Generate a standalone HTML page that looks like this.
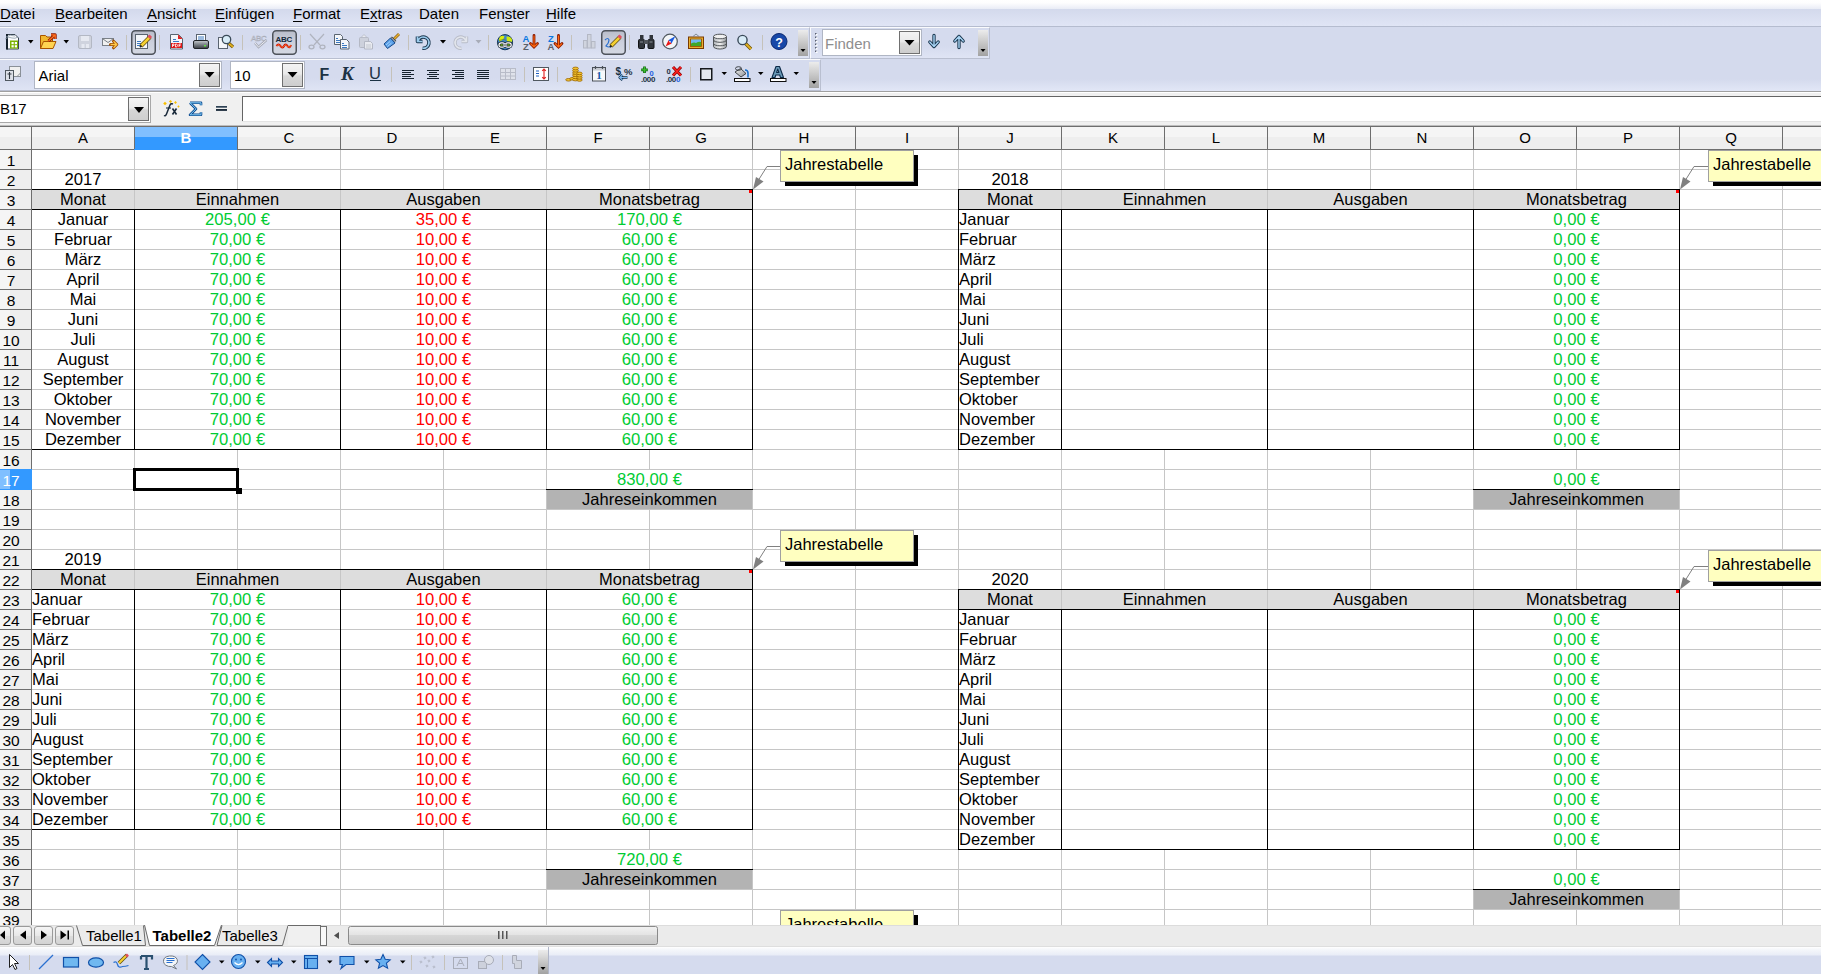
<!DOCTYPE html>
<html><head><meta charset="utf-8">
<style>
html,body{margin:0;padding:0}
body{width:1821px;height:974px;overflow:hidden;position:relative;background:#fff;font-family:"Liberation Sans",sans-serif;}
.a{position:absolute}
.menu{left:0;top:0;width:1821px;height:26px;background:linear-gradient(to bottom,#ffffff 0,#fdfdfe 3px,#e9ecf6 9px,#d3d9ec 9px,#e0e5f5 26px);border-bottom:1px solid #b5bccf}
.mi{top:1px;height:26px;line-height:26px;font-size:15px;color:#000;white-space:nowrap}
.mi u{text-decoration:underline;text-underline-offset:2px}
.tbarea{left:0;top:27px;width:1821px;height:64px;background:linear-gradient(to bottom,#d4daed 0,#d4daed 52px,#e1e6f6 63px)}
.tb{border-top:1px solid #fafbfd;border-left:1px solid #fafbfd;border-right:1px solid #b9bfd0;border-bottom:1px solid #b9bfd0;background:linear-gradient(to bottom,#d5dbee 0,#d5dbee 60%,#dfe4f4 100%);box-sizing:border-box}
.fbar{left:0;top:91px;width:1821px;height:35px;background:#f0f0f0;border-top:1px solid #a0a0a0;box-sizing:border-box}
.colhdr{background:linear-gradient(to bottom,#f5f5f5 0,#f5f5f5 10px,#eeeeee 10px,#eeeeee 100%)}
.rowhdr{background:linear-gradient(to right,#f5f5f5 0,#f5f5f5 10px,#eeeeee 10px,#eeeeee 100%)}
.hl{height:22px;line-height:22px;font-size:15px;text-align:center}
.rl{height:20px;line-height:20px;font-size:15.5px;text-align:center}
.cm{background:#ffffc0;border:1px solid #a0a0a0;font-size:16.5px;line-height:26px;padding-left:4px;box-sizing:content-box;color:#000;white-space:nowrap;overflow:hidden}
.combo{background:#fff;border:1px solid #b8b8b8;box-sizing:border-box}
.ddb{border:1px solid #6e6e6e;background:linear-gradient(to bottom,#f4f4f4 0,#eaeaea 45%,#d6d6d6 55%,#cfcfcf 100%);box-sizing:border-box}
.tri{width:0;height:0;border-left:5px solid transparent;border-right:5px solid transparent;border-top:6px solid #000}
.smtri{width:0;height:0;border-left:3.5px solid transparent;border-right:3.5px solid transparent;border-top:4px solid #000}
.sep{width:1px;background:#c5c2ba}
.handle{background:linear-gradient(to bottom,#ececec 0,#a6a6a6 100%)}
.tabbar{left:0;top:925px;width:1821px;height:22px;background:linear-gradient(to bottom,#dcdcdc 0,#dcdcdc 1px,#ebebeb 1px,#ebebeb 21px,#dedede 21px)}
.dtb{left:0;top:947px;width:1821px;height:27px;background:linear-gradient(to bottom,#ffffff 0,#f6f8fb 2px,#e9edf7 8px,#d5dbee 9px,#d5dbee 100%)}
</style></head><body>
<div class="a menu"></div>
<div class="a mi" style="left:0"><u>D</u>atei</div>
<div class="a mi" style="left:55px"><u>B</u>earbeiten</div>
<div class="a mi" style="left:147px"><u>A</u>nsicht</div>
<div class="a mi" style="left:215px"><u>E</u>infügen</div>
<div class="a mi" style="left:293px"><u>F</u>ormat</div>
<div class="a mi" style="left:360px">E<u>x</u>tras</div>
<div class="a mi" style="left:419px">Da<u>t</u>en</div>
<div class="a mi" style="left:479px">Fen<u>s</u>ter</div>
<div class="a mi" style="left:546px"><u>H</u>ilfe</div>
<div class="a tbarea"></div>
<div class="a tb" style="left:-1px;top:27px;width:811px;height:32px"></div>
<div class="a tb" style="left:810px;top:27px;width:180px;height:32px"></div>
<div class="a tb" style="left:-1px;top:59px;width:822px;height:32px"></div>
<svg class="a" style="left:0;top:0" width="1000" height="92"><defs><linearGradient id="prs" x1="0" y1="0" x2="0" y2="1"><stop offset="0" stop-color="#b9bdca"/><stop offset=".5" stop-color="#ccd0dc"/><stop offset="1" stop-color="#d4d8e2"/></linearGradient><linearGradient id="hdl" x1="0" y1="0" x2="0" y2="1"><stop offset="0" stop-color="#ececec"/><stop offset="1" stop-color="#a2a2a2"/></linearGradient><linearGradient id="ddb" x1="0" y1="0" x2="0" y2="1"><stop offset="0" stop-color="#f4f4f4"/><stop offset=".45" stop-color="#eaeaea"/><stop offset=".55" stop-color="#d8d8d8"/><stop offset="1" stop-color="#cdcdcd"/></linearGradient><linearGradient id="prt" x1="0" y1="0" x2="0" y2="1"><stop offset="0" stop-color="#c8ccd0"/><stop offset=".4" stop-color="#8a9096"/><stop offset="1" stop-color="#3a3e44"/></linearGradient><linearGradient id="db" x1="0" y1="0" x2="1" y2="0"><stop offset="0" stop-color="#b0b4b8"/><stop offset=".5" stop-color="#f0f0f0"/><stop offset="1" stop-color="#909498"/></linearGradient><linearGradient id="bkt" x1="0" y1="0" x2="1" y2="1"><stop offset="0" stop-color="#f4f4f4"/><stop offset="1" stop-color="#8a8e92"/></linearGradient></defs><path d="M6.5 34.5h8.5l3.5 3.5v11h-12z" fill="#fafbfc" stroke="#3a4654"/><rect x="6" y="34" width="2" height="15.5" fill="#16222e"/><path d="M5 39q4 -3 7 -1q3 1 6 -1M6 37q4 -3 9 -1" stroke="#8a9aaa" stroke-width=".8" fill="none"/><rect x="10" y="40.5" width="8" height="8" fill="#7cb400"/><rect x="11.5" y="42" width="2.2" height="2.2" fill="#fff"/><rect x="14.8" y="42" width="2.2" height="2.2" fill="#fff"/><rect x="11.5" y="45.2" width="2.2" height="2.2" fill="#fff"/><rect x="14.8" y="45.2" width="2.2" height="2.2" fill="#fff"/><path d="M28 40h5.5l-2.75 3.5z" fill="#000"/><path d="M40.5 35.5h5l1.5 1.5h5.5v11.5h-12z" fill="#f0b830" stroke="#a85400"/><path d="M43.5 41.5h12.5l-3 7h-12.5z" fill="#ffd452" stroke="#a85400"/><path d="M48.5 41l6 -5.5M51 34.8h4.2v4.2" stroke="#8a1800" stroke-width="3" fill="none" stroke-linejoin="round"/><path d="M48.5 41l6 -5.5M51 34.8h4.2v4.2" stroke="#ff7020" stroke-width="1.3" fill="none"/><path d="M63.5 40h5.5l-2.75 3.5z" fill="#000"/><rect x="78.5" y="35.5" width="13" height="13" rx="1.5" fill="#cfd3de" stroke="#b3b8c4"/><rect x="81" y="36" width="8" height="5" fill="#e6e9f1"/><rect x="81.5" y="44" width="3" height="4" fill="#e6e9f1"/><rect x="86" y="44" width="3" height="4" fill="#e6e9f1"/><rect x="102.5" y="38.5" width="11" height="7" fill="#f0f0f0" stroke="#7a8088"/><path d="M103 39l5 3.5l5 -3.5" stroke="#7a8088" fill="none"/><path d="M110.5 44.5h5.5M113.5 41.2l3.3 3.3l-3.3 3.3" stroke="#9a4a00" stroke-width="3" fill="none" stroke-linejoin="round" stroke-linecap="round"/><path d="M110.5 44.5h5.5M113.5 41.2l3.3 3.3l-3.3 3.3" stroke="#ffc848" stroke-width="1.3" fill="none" stroke-linejoin="round"/><rect x="126" y="35" width="1" height="15" fill="#c5c2ba"/><rect x="131.75" y="30.75" width="23.5" height="23.5" rx="3.5" fill="url(#prs)" stroke="#4e535b" stroke-width="1.5"/><rect x="135.5" y="34.5" width="12" height="14" fill="#f4f6fa" stroke="#5a6470"/><path d="M137 41.5h4M137 43.5h4M137 45.5h4" stroke="#3a78c0"/><path d="M141 46l9 -9" stroke="#5a4a10" stroke-width="4"/><path d="M141 46l9 -9" stroke="#f5d030" stroke-width="2.6"/><path d="M148.5 35.5l2.5 2.5" stroke="#e05060" stroke-width="3"/><path d="M140 47l1.5 -1.5" stroke="#222" stroke-width="2"/><rect x="159" y="35" width="1" height="15" fill="#c5c2ba"/><path d="M170.5 34.5h8l4 4v10.5h-12z" fill="#f4f6fa" stroke="#5a6470"/><path d="M178 34.5l4.5 4.5h-4.5z" fill="#e02020"/><path d="M173 39.5h3M173 41.5h6" stroke="#3a78c0"/><rect x="171" y="43" width="11" height="5" fill="#e01818"/><path d="M172.5 47v-3h1.5v1.5h-1.5M175.5 47v-3h1.2l.8 1.5l-.8 1.5zM179 47v-3h2M179 45.5h1.5" stroke="#fff" stroke-width=".8" fill="none"/><rect x="196.5" y="34.5" width="9" height="7" fill="#fff" stroke="#5a6470"/><path d="M198 37h6M198 39h6" stroke="#3a78c0"/><rect x="193.5" y="40.5" width="15" height="8" rx="1.5" fill="url(#prt)" stroke="#202428"/><rect x="204" y="45" width="2" height="1.5" fill="#60e040"/><rect x="218.5" y="37.5" width="9" height="11" fill="#f4f6fa" stroke="#5a6470"/><path d="M229 43.5l4 3.5" stroke="#6a4e00" stroke-width="3.2"/><path d="M229 43.5l4 3.5" stroke="#e0b020" stroke-width="1.8"/><circle cx="226.5" cy="39.5" r="4.2" fill="#d8ecf8" stroke="#3a4a58" stroke-width="1.3"/><rect x="242" y="35" width="1" height="15" fill="#c5c2ba"/><text x="251" y="40.5" font-family="Liberation Sans" font-size="8" fill="#e4e7ef" stroke="#a8acb8" stroke-width=".5" letter-spacing="-.3">ABC</text><path d="M255 43l3.5 4l8 -7" stroke="#a8acb8" stroke-width="2.4" fill="none"/><path d="M255 43l3.5 4l8 -7" stroke="#e8eaf0" stroke-width="1" fill="none"/><rect x="272.75" y="30.75" width="23.5" height="23.5" rx="3.5" fill="url(#prs)" stroke="#4e535b" stroke-width="1.5"/><text x="275.5" y="42.3" font-family="Liberation Sans" font-weight="bold" font-size="8" fill="#15283a" letter-spacing="-.3">ABC</text><path d="M276.5 46q2 -3 4 0t3.5 0t3.5 0t3.5 -1" stroke="#d00000" stroke-width="2" fill="none"/><path d="M276.5 46q2 -3 4 0t3.5 0t3.5 0t3.5 -1" stroke="#ffa030" stroke-width=".7" fill="none"/><rect x="300" y="35" width="1" height="15" fill="#c5c2ba"/><path d="M310 34l10 11M324 34l-10 11" stroke="#b0b4bf" stroke-width="1.2"/><ellipse cx="311.5" cy="47" rx="2.5" ry="1.8" fill="none" stroke="#b0b4bf" stroke-width="1.3"/><ellipse cx="322.5" cy="47" rx="2.5" ry="1.8" fill="none" stroke="#b0b4bf" stroke-width="1.3"/><path d="M334.5 34.5h6l2 2v8h-8z" fill="#f4f6fa" stroke="#5a6470"/><path d="M336 38.5h2M336 40.5h4M336 42.5h4" stroke="#3a78c0"/><path d="M340.5 39.5h6l2.5 2.5v7h-8.5z" fill="#f4f6fa" stroke="#5a6470"/><path d="M342 43.5h2M342 45.5h5M342 47.5h5" stroke="#3a78c0"/><rect x="359.5" y="37.5" width="9" height="10" rx="1" fill="#cdd1dc" stroke="#b4b8c4"/><path d="M361 37.5l3 -3l3 3z" fill="#e8eaf0" stroke="#b4b8c4" stroke-width=".8"/><path d="M364.5 41.5h6l2 2v5.5h-8z" fill="#e8eaf0" stroke="#b4b8c4"/><path d="M366 45h5M366 47h5" stroke="#c4c8d0"/><path d="M394 39l5 -5" stroke="#8a6010" stroke-width="2.8"/><path d="M394 39l5 -5" stroke="#e8b030" stroke-width="1.4"/><path d="M391 37.5l4.5 4.5" stroke="#303a44" stroke-width="2.5"/><path d="M391 37.5l4.5 4.5" stroke="#fff" stroke-width="1"/><path d="M390.5 38l-6.5 6l3.5 4.5l7.5 -5.5z" fill="#5aa0e8" stroke="#1a4a8a"/><path d="M386 45l4 -3.5M387.5 46.5l4 -3.5" stroke="#b8dcff" stroke-width=".8"/><rect x="408" y="35" width="1" height="15" fill="#c5c2ba"/><path d="M417.5 36.5v5h5M418 41a5.6 5.6 0 1 1 4.5 7.2" stroke="#1c3850" stroke-width="3.6" fill="none" stroke-linejoin="round"/><path d="M417.5 36.5v5h5M418 41a5.6 5.6 0 1 1 4.5 7.2" stroke="#9ccced" stroke-width="1.7" fill="none" stroke-linejoin="round"/><path d="M440 40h6l-3.0 3.5z" fill="#000"/><path d="M466.5 36.5v5h-5M466 41a5.6 5.6 0 1 0 -4.5 7.2" stroke="#b8bcc8" stroke-width="3.4" fill="none" stroke-linejoin="round"/><path d="M466.5 36.5v5h-5M466 41a5.6 5.6 0 1 0 -4.5 7.2" stroke="#e2e5ec" stroke-width="1.6" fill="none" stroke-linejoin="round"/><path d="M475.5 40h6l-3.0 3.5z" fill="#a8acb8"/><rect x="488" y="35" width="1" height="15" fill="#c5c2ba"/><circle cx="505" cy="42.2" r="7.6" fill="#3d86c8" stroke="#1a3656" stroke-width="1"/><path d="M499 41.5q-.5 -4 2 -5.5q2 -.8 3.5 .2q-.5 2 -1.5 3q-1 1.5 -4 2.3z" fill="#d8ec10"/><path d="M506.5 36.5q3 -.5 5 2q1 2 .5 3.2q-3 .3 -5 -.7q-.5 -2.5 -.5 -4.5z" fill="#cce810"/><path d="M499 40.5q3 -1 5 -1q1 0 2 1" stroke="#6a8a20" stroke-width=".7" fill="none"/><rect x="499" y="42.8" width="5.8" height="4.4" rx="2.1" fill="#5a8a20" stroke="#13202c" stroke-width="2.4"/><rect x="505.4" y="42.8" width="5.8" height="4.4" rx="2.1" fill="#5a8a20" stroke="#13202c" stroke-width="2.4"/><rect x="499" y="42.8" width="5.8" height="4.4" rx="2.1" fill="none" stroke="#fff" stroke-width="1.2"/><rect x="505.4" y="42.8" width="5.8" height="4.4" rx="2.1" fill="none" stroke="#fff" stroke-width="1.2"/><path d="M502.8 45h4.6" stroke="#13202c" stroke-width="2.2"/><path d="M503 45h4.2" stroke="#fff" stroke-width="1.1"/><text x="522.5" y="41.5" font-family="Liberation Sans" font-weight="bold" font-size="9.5" fill="#0a78e0">A</text><text x="523" y="50" font-family="Liberation Sans" font-weight="bold" font-size="9.5" fill="#5a6068">Z</text><path d="M534 35.5v11.5M530.5 43.5l3.5 3.5l3.5 -3.5" stroke="#8a1a00" stroke-width="2.8" fill="none" stroke-linecap="round"/><path d="M534 35.5v11.5M530.5 43.5l3.5 3.5l3.5 -3.5" stroke="#ff6a10" stroke-width="1.1" fill="none"/><text x="548" y="41.5" font-family="Liberation Sans" font-weight="bold" font-size="9.5" fill="#0a78e0">Z</text><text x="547.5" y="50" font-family="Liberation Sans" font-weight="bold" font-size="9.5" fill="#5a6068">A</text><path d="M558.5 35.5v11.5M555 43.5l3.5 3.5l3.5 -3.5" stroke="#8a1a00" stroke-width="2.8" fill="none" stroke-linecap="round"/><path d="M558.5 35.5v11.5M555 43.5l3.5 3.5l3.5 -3.5" stroke="#ff6a10" stroke-width="1.1" fill="none"/><rect x="571" y="35" width="1" height="15" fill="#c5c2ba"/><rect x="583.5" y="40.5" width="3.5" height="7.5" fill="#d0d4de" stroke="#b4b8c4"/><rect x="587.5" y="34.5" width="3.5" height="13.5" fill="#d0d4de" stroke="#b4b8c4"/><rect x="591.5" y="41.5" width="3.5" height="6.5" fill="#d0d4de" stroke="#b4b8c4"/><rect x="601.75" y="30.75" width="23.5" height="23.5" rx="3.5" fill="url(#prs)" stroke="#4e535b" stroke-width="1.5"/><path d="M605 40q3 -3 4 0q0 3 -3 6q3 2 6 0" stroke="#2a70d0" stroke-width="1.2" fill="none"/><path d="M611 46l9 -9" stroke="#5a4a10" stroke-width="4"/><path d="M611 46l9 -9" stroke="#f5d030" stroke-width="2.6"/><path d="M618.5 35.5l2.5 2.5" stroke="#e05060" stroke-width="3"/><path d="M610 47l1.5 -1.5" stroke="#222" stroke-width="2"/><rect x="629" y="35" width="1" height="15" fill="#c5c2ba"/><rect x="638.5" y="39.5" width="6" height="9" rx="1" fill="#30343a" stroke="#101214"/><rect x="648" y="39.5" width="6" height="9" rx="1" fill="#30343a" stroke="#101214"/><rect x="640" y="35" width="3.5" height="5" fill="#30343a"/><rect x="649.5" y="35" width="3.5" height="5" fill="#30343a"/><rect x="644" y="40" width="4.5" height="4" fill="#50545a"/><path d="M640 42h3M649.5 42h3" stroke="#8a9098"/><circle cx="670" cy="41.5" r="7.3" fill="#f4f6f8" stroke="#505860" stroke-width="1.2"/><path d="M675.5 36l-4 7.5l-3.2 -3.2z" fill="#1a5ae0"/><path d="M665.5 46.5l3 -6.2l3.2 3.2z" fill="#e81818"/><circle cx="670" cy="41.8" r=".8" fill="#fff"/><rect x="688.5" y="37" width="15" height="11.5" fill="#e8b030" stroke="#7a3a00"/><rect x="690.5" y="39" width="11" height="7.5" fill="none" stroke="#8a4a00" stroke-width=".8"/><rect x="691" y="39.5" width="10" height="6.5" fill="#70b8f0"/><path d="M691 46v-2.5q3 -1.5 5 -.5q3 -2 5 -1v4z" fill="#40a828"/><path d="M693 36.5l3 -2.5l3 2.5" stroke="#707880" fill="none" stroke-width=".8"/><path d="M713.5 36.5v10a6.5 2.5 0 0 0 13 0v-10" fill="url(#db)" stroke="#505458"/><ellipse cx="720" cy="36.5" rx="6.5" ry="2.3" fill="#f0f0f0" stroke="#505458"/><path d="M713.5 40a6.5 2.3 0 0 0 13 0M713.5 43.5a6.5 2.3 0 0 0 13 0" stroke="#505458" fill="none"/><path d="M745 43l6 6" stroke="#6a4e00" stroke-width="3.4"/><path d="M745 43l6 6" stroke="#e0b020" stroke-width="2"/><circle cx="742.5" cy="40" r="4.6" fill="#d8ecf8" stroke="#3a4a58" stroke-width="1.4"/><rect x="762" y="35" width="1" height="15" fill="#c5c2ba"/><circle cx="779" cy="41.5" r="8" fill="#1848a8" stroke="#0a2870"/><text x="779" y="46.8" text-anchor="middle" font-family="Liberation Sans" font-weight="bold" font-size="12.5" fill="#fff">?</text><rect x="798" y="30" width="10" height="26" fill="url(#hdl)"/><path d="M800.5 49h5l-2.5 3z" fill="#000"/><rect x="815" y="33.0" width="1.5" height="1.5" fill="#5a6070"/><rect x="816" y="34.0" width="1.5" height="1.5" fill="#fff"/><rect x="815" y="36.5" width="1.5" height="1.5" fill="#5a6070"/><rect x="816" y="37.5" width="1.5" height="1.5" fill="#fff"/><rect x="815" y="40.0" width="1.5" height="1.5" fill="#5a6070"/><rect x="816" y="41.0" width="1.5" height="1.5" fill="#fff"/><rect x="815" y="43.5" width="1.5" height="1.5" fill="#5a6070"/><rect x="816" y="44.5" width="1.5" height="1.5" fill="#fff"/><rect x="815" y="47.0" width="1.5" height="1.5" fill="#5a6070"/><rect x="816" y="48.0" width="1.5" height="1.5" fill="#fff"/><rect x="815" y="50.5" width="1.5" height="1.5" fill="#5a6070"/><rect x="816" y="51.5" width="1.5" height="1.5" fill="#fff"/><rect x="822.5" y="29.5" width="99" height="26" fill="#fff" stroke="#b0b6c4"/><rect x="899.5" y="31.5" width="20" height="22" fill="url(#ddb)" stroke="#707070"/><path d="M904.5 40h10l-5.0 5.5z" fill="#000"/><text x="825" y="48.5" font-family="Liberation Sans" font-size="15" fill="#8e8e8e">Finden</text><path d="M934 35.5v11M929.8 42l4.2 4.6l4.2 -4.6" stroke="#17344c" stroke-width="3.3" fill="none" stroke-linecap="round" stroke-linejoin="round"/><path d="M934 35.5v11M929.8 42l4.2 4.6l4.2 -4.6" stroke="#a8d4f4" stroke-width="1.4" fill="none" stroke-linecap="round" stroke-linejoin="round"/><path d="M959 47.5v-11M954.8 41l4.2 -4.6l4.2 4.6" stroke="#17344c" stroke-width="3.3" fill="none" stroke-linecap="round" stroke-linejoin="round"/><path d="M959 47.5v-11M954.8 41l4.2 -4.6l4.2 4.6" stroke="#a8d4f4" stroke-width="1.4" fill="none" stroke-linecap="round" stroke-linejoin="round"/><rect x="978" y="30" width="10" height="26" fill="url(#hdl)"/><path d="M980.5 49h5l-2.5 3z" fill="#000"/><rect x="9.5" y="66.5" width="11" height="10" fill="#f0f0f0" stroke="#8a9098"/><path d="M17 76.5l3.5 -3.5" stroke="#8a9098"/><rect x="5.5" y="70.5" width="8" height="10" fill="#dde0e8" stroke="#505860"/><path d="M9.5 72v7M7.5 74h4" stroke="#303840" stroke-width="1.1"/><rect x="34.5" y="61.5" width="187" height="27" fill="#fff" stroke="#b0b6c4"/><rect x="199.5" y="63.5" width="20" height="23" fill="url(#ddb)" stroke="#707070"/><path d="M204.5 72h10l-5.0 5.5z" fill="#000"/><text x="38.5" y="80.5" font-family="Liberation Sans" font-size="15" fill="#000">Arial</text><rect x="230.5" y="61.5" width="74" height="27" fill="#fff" stroke="#b0b6c4"/><rect x="282.5" y="63.5" width="20" height="23" fill="url(#ddb)" stroke="#707070"/><path d="M287.5 72h10l-5.0 5.5z" fill="#000"/><text x="234" y="80.5" font-family="Liberation Sans" font-size="15" fill="#000">10</text><text x="319.5" y="80" font-family="Liberation Sans" font-weight="bold" font-size="16" fill="#1c3244">F</text><text x="341" y="80" font-family="Liberation Serif" font-style="italic" font-weight="bold" font-size="19" fill="#1c3244">K</text><text x="369" y="79" font-family="Liberation Sans" font-size="16.5" fill="#1c3244">U</text><rect x="370" y="80" width="11" height="1" fill="#1c3244"/><rect x="391" y="67" width="1" height="15" fill="#c5c2ba"/><rect x="402" y="70" width="12" height="1" fill="#15222e"/><rect x="402" y="72" width="9" height="1" fill="#15222e"/><rect x="402" y="74" width="12" height="1" fill="#15222e"/><rect x="402" y="76" width="9" height="1" fill="#15222e"/><rect x="402" y="78" width="12" height="1" fill="#15222e"/><rect x="427" y="70" width="12" height="1" fill="#15222e"/><rect x="429" y="72" width="8" height="1" fill="#15222e"/><rect x="427" y="74" width="12" height="1" fill="#15222e"/><rect x="429" y="76" width="8" height="1" fill="#15222e"/><rect x="427" y="78" width="12" height="1" fill="#15222e"/><rect x="452" y="70" width="12" height="1" fill="#15222e"/><rect x="455" y="72" width="9" height="1" fill="#15222e"/><rect x="452" y="74" width="12" height="1" fill="#15222e"/><rect x="455" y="76" width="9" height="1" fill="#15222e"/><rect x="452" y="78" width="12" height="1" fill="#15222e"/><rect x="477" y="70" width="12" height="1" fill="#15222e"/><rect x="477" y="72" width="12" height="1" fill="#15222e"/><rect x="477" y="74" width="12" height="1" fill="#15222e"/><rect x="477" y="76" width="12" height="1" fill="#15222e"/><rect x="477" y="78" width="12" height="1" fill="#15222e"/><rect x="500.5" y="68.5" width="15" height="11" fill="#dfe2ea" stroke="#b8bcc8"/><path d="M500.5 72.5h15M500.5 76h15M505.5 68.5v11M510.5 68.5v11" stroke="#b8bcc8"/><rect x="524" y="67" width="1" height="15" fill="#c5c2ba"/><rect x="533.5" y="67.5" width="15" height="13" fill="#fff" stroke="#505860"/><path d="M536 71h3M536 73.5h3M536 76h3" stroke="#2060c0"/><path d="M544 69v10M542.2 70.8l1.8 -1.8l1.8 1.8M542.2 77.2l1.8 1.8l1.8 -1.8" stroke="#e02020" stroke-width="1.1" fill="none"/><rect x="557" y="67" width="1" height="15" fill="#c5c2ba"/><ellipse cx="568.5" cy="79.8" rx="2.8" ry="1.3" fill="#f2c230" stroke="#9a6400" stroke-width=".8"/><ellipse cx="572.5" cy="78.8" rx="2.8" ry="1.3" fill="#f2c230" stroke="#9a6400" stroke-width=".8"/><ellipse cx="575.5" cy="79.5" rx="2.9" ry="1.4" fill="#f2c230" stroke="#9a6400" stroke-width=".8"/><ellipse cx="575.5" cy="77.3" rx="2.9" ry="1.4" fill="#f2c230" stroke="#9a6400" stroke-width=".8"/><ellipse cx="575.5" cy="75.1" rx="2.9" ry="1.4" fill="#f2c230" stroke="#9a6400" stroke-width=".8"/><ellipse cx="575.5" cy="72.9" rx="2.9" ry="1.4" fill="#f2c230" stroke="#9a6400" stroke-width=".8"/><ellipse cx="575.5" cy="70.7" rx="2.9" ry="1.4" fill="#f2c230" stroke="#9a6400" stroke-width=".8"/><ellipse cx="575.5" cy="68.5" rx="2.9" ry="1.4" fill="#f2c230" stroke="#9a6400" stroke-width=".8"/><ellipse cx="579.5" cy="80.0" rx="2.7" ry="1.3" fill="#f2c230" stroke="#9a6400" stroke-width=".8"/><ellipse cx="579.5" cy="77.8" rx="2.7" ry="1.3" fill="#f2c230" stroke="#9a6400" stroke-width=".8"/><ellipse cx="579.5" cy="75.6" rx="2.7" ry="1.3" fill="#f2c230" stroke="#9a6400" stroke-width=".8"/><ellipse cx="579.5" cy="73.4" rx="2.7" ry="1.3" fill="#f2c230" stroke="#9a6400" stroke-width=".8"/><rect x="592.5" y="67.5" width="13" height="13.5" fill="#f6f8fa" stroke="#4a5058"/><rect x="593" y="68" width="12" height="2.5" fill="#c8ccd4"/><path d="M595.5 66v3M602.5 66v3" stroke="#4a5058" stroke-width="1.2"/><text x="599" y="79.3" text-anchor="middle" font-family="Liberation Serif" font-weight="bold" font-size="11" fill="#1a5aa8">1</text><text x="615.5" y="74.5" font-family="Liberation Sans" font-weight="bold" font-size="10" fill="#1c3244">$</text><text x="624" y="74.5" font-family="Liberation Sans" font-weight="bold" font-size="9.5" fill="#1c3244">%</text><path d="M627.5 77.5h-7M622.5 75l-2.8 2.5l2.8 2.5" stroke="#17344c" stroke-width="2.6" fill="none" stroke-linejoin="round"/><path d="M627.5 77.5h-7M622.5 75l-2.8 2.5l2.8 2.5" stroke="#80b8f0" stroke-width="1.1" fill="none"/><path d="M644.5 66.5v6.5M641.2 69.8h6.6" stroke="#136a10" stroke-width="2.8"/><path d="M644.5 67v5.5M641.7 69.8h5.6" stroke="#3cc030" stroke-width="1.3"/><text x="649.5" y="75.5" font-family="Liberation Sans" font-weight="bold" font-size="7.5" fill="#2060e0">0</text><text x="641" y="81.5" font-family="Liberation Sans" font-weight="bold" font-size="8" fill="#1c3244" letter-spacing="-.4">.000</text><text x="666.5" y="74" font-family="Liberation Sans" font-weight="bold" font-size="7.5" fill="#1c3244">0</text><path d="M673 67l8 8.5M681 67l-8 8.5" stroke="#8a0000" stroke-width="3"/><path d="M673 67l8 8.5M681 67l-8 8.5" stroke="#ff2020" stroke-width="1.5"/><text x="666" y="81.5" font-family="Liberation Sans" font-weight="bold" font-size="8" fill="#1c3244" letter-spacing="-.4">.00<tspan fill="#2060e0">0</tspan></text><rect x="690" y="67" width="1" height="15" fill="#c5c2ba"/><rect x="700.75" y="68.75" width="11" height="11" fill="#e4e8ee" stroke="#15181c" stroke-width="1.5"/><path d="M721.5 72h5.5l-2.75 3z" fill="#000"/><path d="M745 70q3 0 3 3v4.5" stroke="#1a70c8" stroke-width="1.6" fill="none"/><path d="M735 72l5.5 -3.5l5.5 5l-5 3.5z" fill="url(#bkt)" stroke="#303438" stroke-width=".9"/><ellipse cx="738.5" cy="68.5" rx="3" ry="1.8" fill="none" stroke="#303438" stroke-width=".9"/><rect x="734.5" y="78.5" width="15.5" height="3" fill="#fff" stroke="#101010"/><path d="M758 72h5.5l-2.75 3z" fill="#000"/><path d="M772 77.5l4 -11h3.5l4 11h-3l-.8 -2.5h-3.9l-.8 2.5zM776.6 72.5h2.3l-1.15 -3.4z" fill="#6a9ab8" stroke="#0c2a48" stroke-width="1.1" stroke-linejoin="round"/><rect x="770.5" y="78.5" width="15.5" height="3" fill="#fff" stroke="#101010"/><path d="M793.5 72h5.5l-2.75 3z" fill="#000"/><rect x="809" y="62" width="10" height="26" fill="url(#hdl)"/><path d="M811.5 81h5l-2.5 3z" fill="#000"/></svg>
<div class="a fbar"></div>
<div class="a" style="left:0;top:92px;width:1821px;height:1px;background:#fff"></div>
<div class="a combo" style="left:-2px;top:95px;width:153px;height:28px;border-color:#a8a8a8"></div>
<div class="a ddb" style="left:128px;top:97px;width:21px;height:24px"><div class="a tri" style="left:5px;top:9px"></div></div>
<div class="a" style="left:0;top:95px;height:28px;line-height:28px;font-size:15px">B17</div>
<svg class="a" style="left:0;top:0" width="260" height="126"><path d="M163.2 103.5L165 101.7L166.8 103.5L165 105.3z" fill="#f8c000"/><path d="M168.9 101.5L170.5 99.9L172.1 101.5L170.5 103.1z" fill="#f8c000"/><path d="M174.1 102.5L175.5 101.1L176.9 102.5L175.5 103.9z" fill="#f8c000"/><path d="M177.3 106.5L178.5 105.3L179.7 106.5L178.5 107.7z" fill="#f8c000"/><path d="M164 115.5q1.5 1 2.5 -1.5l3.5 -9q1 -2 3 -1" stroke="#1a2a3a" stroke-width="1.5" fill="none"/><path d="M166 108h5" stroke="#1a2a3a" stroke-width="1.1"/><path d="M172.5 108.5l4 6M176.5 108.5l-4 6" stroke="#1a2a3a" stroke-width="1.6"/><path d="M190 102.8h11v2.5M190 102.8l6 6l-6 6h11v-2.5" stroke="#0a4a90" stroke-width="2.6" fill="none" stroke-linejoin="round"/><path d="M190 102.8h11v2.5M190 102.8l6 6l-6 6h11v-2.5" stroke="#8ad0f8" stroke-width="1" fill="none" stroke-linejoin="round"/><rect x="216" y="106" width="11" height="1.7" fill="#2e4254"/><rect x="216" y="109" width="11" height="1.9" fill="#1c2c3c"/></svg>
<div class="a" style="left:242px;top:96px;width:1579px;height:25px;background:#fff;border-top:1px solid #646464;border-left:1px solid #646464;box-sizing:border-box"></div>
<div class="a" style="left:242px;top:121px;width:1579px;height:1px;background:#e3e3e3"></div>
<div class="a" style="left:0;top:125px;width:1821px;height:1px;background:#bdbdbd"></div>
<svg class="a" style="left:0;top:0" width="1821" height="974" shape-rendering="crispEdges"><rect x="31" y="189" width="721" height="20" fill="#dddddd"/><rect x="546" y="489" width="206" height="20" fill="#b3b3b3"/><rect x="958" y="189" width="721" height="20" fill="#dddddd"/><rect x="1473" y="489" width="206" height="20" fill="#b3b3b3"/><rect x="31" y="569" width="721" height="20" fill="#dddddd"/><rect x="546" y="869" width="206" height="20" fill="#b3b3b3"/><rect x="958" y="589" width="721" height="20" fill="#dddddd"/><rect x="1473" y="889" width="206" height="20" fill="#b3b3b3"/><rect x="31" y="169" width="1790" height="1" fill="#c6c6c6"/><rect x="31" y="189" width="1790" height="1" fill="#c6c6c6"/><rect x="31" y="209" width="1790" height="1" fill="#c6c6c6"/><rect x="31" y="229" width="1790" height="1" fill="#c6c6c6"/><rect x="31" y="249" width="1790" height="1" fill="#c6c6c6"/><rect x="31" y="269" width="1790" height="1" fill="#c6c6c6"/><rect x="31" y="289" width="1790" height="1" fill="#c6c6c6"/><rect x="31" y="309" width="1790" height="1" fill="#c6c6c6"/><rect x="31" y="329" width="1790" height="1" fill="#c6c6c6"/><rect x="31" y="349" width="1790" height="1" fill="#c6c6c6"/><rect x="31" y="369" width="1790" height="1" fill="#c6c6c6"/><rect x="31" y="389" width="1790" height="1" fill="#c6c6c6"/><rect x="31" y="409" width="1790" height="1" fill="#c6c6c6"/><rect x="31" y="429" width="1790" height="1" fill="#c6c6c6"/><rect x="31" y="449" width="1790" height="1" fill="#c6c6c6"/><rect x="31" y="469" width="1790" height="1" fill="#c6c6c6"/><rect x="31" y="489" width="1790" height="1" fill="#c6c6c6"/><rect x="31" y="509" width="1790" height="1" fill="#c6c6c6"/><rect x="31" y="529" width="1790" height="1" fill="#c6c6c6"/><rect x="31" y="549" width="1790" height="1" fill="#c6c6c6"/><rect x="31" y="569" width="1790" height="1" fill="#c6c6c6"/><rect x="31" y="589" width="1790" height="1" fill="#c6c6c6"/><rect x="31" y="609" width="1790" height="1" fill="#c6c6c6"/><rect x="31" y="629" width="1790" height="1" fill="#c6c6c6"/><rect x="31" y="649" width="1790" height="1" fill="#c6c6c6"/><rect x="31" y="669" width="1790" height="1" fill="#c6c6c6"/><rect x="31" y="689" width="1790" height="1" fill="#c6c6c6"/><rect x="31" y="709" width="1790" height="1" fill="#c6c6c6"/><rect x="31" y="729" width="1790" height="1" fill="#c6c6c6"/><rect x="31" y="749" width="1790" height="1" fill="#c6c6c6"/><rect x="31" y="769" width="1790" height="1" fill="#c6c6c6"/><rect x="31" y="789" width="1790" height="1" fill="#c6c6c6"/><rect x="31" y="809" width="1790" height="1" fill="#c6c6c6"/><rect x="31" y="829" width="1790" height="1" fill="#c6c6c6"/><rect x="31" y="849" width="1790" height="1" fill="#c6c6c6"/><rect x="31" y="869" width="1790" height="1" fill="#c6c6c6"/><rect x="31" y="889" width="1790" height="1" fill="#c6c6c6"/><rect x="31" y="909" width="1790" height="1" fill="#c6c6c6"/><rect x="134" y="149" width="1" height="776" fill="#c6c6c6"/><rect x="237" y="149" width="1" height="40" fill="#c6c6c6"/><rect x="237" y="450" width="1" height="119" fill="#c6c6c6"/><rect x="237" y="830" width="1" height="95" fill="#c6c6c6"/><rect x="340" y="149" width="1" height="776" fill="#c6c6c6"/><rect x="443" y="149" width="1" height="40" fill="#c6c6c6"/><rect x="443" y="450" width="1" height="119" fill="#c6c6c6"/><rect x="443" y="830" width="1" height="95" fill="#c6c6c6"/><rect x="546" y="149" width="1" height="776" fill="#c6c6c6"/><rect x="649" y="149" width="1" height="40" fill="#c6c6c6"/><rect x="649" y="450" width="1" height="19" fill="#c6c6c6"/><rect x="649" y="510" width="1" height="59" fill="#c6c6c6"/><rect x="649" y="830" width="1" height="19" fill="#c6c6c6"/><rect x="649" y="890" width="1" height="35" fill="#c6c6c6"/><rect x="752" y="149" width="1" height="776" fill="#c6c6c6"/><rect x="855" y="149" width="1" height="776" fill="#c6c6c6"/><rect x="958" y="149" width="1" height="776" fill="#c6c6c6"/><rect x="1061" y="149" width="1" height="776" fill="#c6c6c6"/><rect x="1164" y="149" width="1" height="40" fill="#c6c6c6"/><rect x="1164" y="450" width="1" height="139" fill="#c6c6c6"/><rect x="1164" y="850" width="1" height="75" fill="#c6c6c6"/><rect x="1267" y="149" width="1" height="776" fill="#c6c6c6"/><rect x="1370" y="149" width="1" height="40" fill="#c6c6c6"/><rect x="1370" y="450" width="1" height="139" fill="#c6c6c6"/><rect x="1370" y="850" width="1" height="75" fill="#c6c6c6"/><rect x="1473" y="149" width="1" height="776" fill="#c6c6c6"/><rect x="1576" y="149" width="1" height="40" fill="#c6c6c6"/><rect x="1576" y="450" width="1" height="19" fill="#c6c6c6"/><rect x="1576" y="510" width="1" height="79" fill="#c6c6c6"/><rect x="1576" y="850" width="1" height="19" fill="#c6c6c6"/><rect x="1576" y="910" width="1" height="15" fill="#c6c6c6"/><rect x="1679" y="149" width="1" height="776" fill="#c6c6c6"/><rect x="1782" y="149" width="1" height="776" fill="#c6c6c6"/><rect x="31" y="189" width="1" height="261" fill="#000"/><rect x="752" y="189" width="1" height="261" fill="#000"/><rect x="134" y="209" width="1" height="241" fill="#000"/><rect x="340" y="209" width="1" height="241" fill="#000"/><rect x="546" y="209" width="1" height="241" fill="#000"/><rect x="958" y="189" width="1" height="261" fill="#000"/><rect x="1679" y="189" width="1" height="261" fill="#000"/><rect x="1061" y="209" width="1" height="241" fill="#000"/><rect x="1267" y="209" width="1" height="241" fill="#000"/><rect x="1473" y="209" width="1" height="241" fill="#000"/><rect x="31" y="569" width="1" height="261" fill="#000"/><rect x="752" y="569" width="1" height="261" fill="#000"/><rect x="134" y="589" width="1" height="241" fill="#000"/><rect x="340" y="589" width="1" height="241" fill="#000"/><rect x="546" y="589" width="1" height="241" fill="#000"/><rect x="958" y="589" width="1" height="261" fill="#000"/><rect x="1679" y="589" width="1" height="261" fill="#000"/><rect x="1061" y="609" width="1" height="241" fill="#000"/><rect x="1267" y="609" width="1" height="241" fill="#000"/><rect x="1473" y="609" width="1" height="241" fill="#000"/><rect x="31" y="189" width="722" height="1" fill="#000"/><rect x="31" y="209" width="722" height="1" fill="#000"/><rect x="31" y="449" width="722" height="1" fill="#000"/><rect x="546" y="489" width="207" height="1" fill="#000"/><rect x="958" y="189" width="722" height="1" fill="#000"/><rect x="958" y="209" width="722" height="1" fill="#000"/><rect x="958" y="449" width="722" height="1" fill="#000"/><rect x="1473" y="489" width="207" height="1" fill="#000"/><rect x="31" y="569" width="722" height="1" fill="#000"/><rect x="31" y="589" width="722" height="1" fill="#000"/><rect x="31" y="829" width="722" height="1" fill="#000"/><rect x="546" y="869" width="207" height="1" fill="#000"/><rect x="958" y="589" width="722" height="1" fill="#000"/><rect x="958" y="609" width="722" height="1" fill="#000"/><rect x="958" y="849" width="722" height="1" fill="#000"/><rect x="1473" y="889" width="207" height="1" fill="#000"/><rect x="749" y="190" width="3" height="3" fill="#ff0000"/><rect x="1676" y="190" width="3" height="3" fill="#ff0000"/><rect x="749" y="570" width="3" height="3" fill="#ff0000"/><rect x="1676" y="590" width="3" height="3" fill="#ff0000"/></svg><div class="a" style="left:32px;top:170px;width:102px;height:20px;line-height:20px;font-size:16.67px;color:#000;text-align:center;">2017</div><div class="a" style="left:32px;top:189px;width:102px;height:20px;line-height:20px;font-size:16.5px;color:#000;text-align:center;">Monat</div><div class="a" style="left:135px;top:189px;width:205px;height:20px;line-height:20px;font-size:16.5px;color:#000;text-align:center;">Einnahmen</div><div class="a" style="left:341px;top:189px;width:205px;height:20px;line-height:20px;font-size:16.5px;color:#000;text-align:center;">Ausgaben</div><div class="a" style="left:547px;top:189px;width:205px;height:20px;line-height:20px;font-size:16.5px;color:#000;text-align:center;">Monatsbetrag</div><div class="a" style="left:32px;top:209px;width:102px;height:20px;line-height:20px;font-size:16.5px;color:#000;text-align:center;">Januar</div><div class="a" style="left:135px;top:210px;width:205px;height:20px;line-height:20px;font-size:16.67px;color:#00cc33;text-align:center;">205,00 €</div><div class="a" style="left:341px;top:210px;width:205px;height:20px;line-height:20px;font-size:16.67px;color:#ff0000;text-align:center;">35,00 €</div><div class="a" style="left:547px;top:210px;width:205px;height:20px;line-height:20px;font-size:16.67px;color:#00cc33;text-align:center;">170,00 €</div><div class="a" style="left:32px;top:229px;width:102px;height:20px;line-height:20px;font-size:16.5px;color:#000;text-align:center;">Februar</div><div class="a" style="left:135px;top:230px;width:205px;height:20px;line-height:20px;font-size:16.67px;color:#00cc33;text-align:center;">70,00 €</div><div class="a" style="left:341px;top:230px;width:205px;height:20px;line-height:20px;font-size:16.67px;color:#ff0000;text-align:center;">10,00 €</div><div class="a" style="left:547px;top:230px;width:205px;height:20px;line-height:20px;font-size:16.67px;color:#00cc33;text-align:center;">60,00 €</div><div class="a" style="left:32px;top:249px;width:102px;height:20px;line-height:20px;font-size:16.5px;color:#000;text-align:center;">März</div><div class="a" style="left:135px;top:250px;width:205px;height:20px;line-height:20px;font-size:16.67px;color:#00cc33;text-align:center;">70,00 €</div><div class="a" style="left:341px;top:250px;width:205px;height:20px;line-height:20px;font-size:16.67px;color:#ff0000;text-align:center;">10,00 €</div><div class="a" style="left:547px;top:250px;width:205px;height:20px;line-height:20px;font-size:16.67px;color:#00cc33;text-align:center;">60,00 €</div><div class="a" style="left:32px;top:269px;width:102px;height:20px;line-height:20px;font-size:16.5px;color:#000;text-align:center;">April</div><div class="a" style="left:135px;top:270px;width:205px;height:20px;line-height:20px;font-size:16.67px;color:#00cc33;text-align:center;">70,00 €</div><div class="a" style="left:341px;top:270px;width:205px;height:20px;line-height:20px;font-size:16.67px;color:#ff0000;text-align:center;">10,00 €</div><div class="a" style="left:547px;top:270px;width:205px;height:20px;line-height:20px;font-size:16.67px;color:#00cc33;text-align:center;">60,00 €</div><div class="a" style="left:32px;top:289px;width:102px;height:20px;line-height:20px;font-size:16.5px;color:#000;text-align:center;">Mai</div><div class="a" style="left:135px;top:290px;width:205px;height:20px;line-height:20px;font-size:16.67px;color:#00cc33;text-align:center;">70,00 €</div><div class="a" style="left:341px;top:290px;width:205px;height:20px;line-height:20px;font-size:16.67px;color:#ff0000;text-align:center;">10,00 €</div><div class="a" style="left:547px;top:290px;width:205px;height:20px;line-height:20px;font-size:16.67px;color:#00cc33;text-align:center;">60,00 €</div><div class="a" style="left:32px;top:309px;width:102px;height:20px;line-height:20px;font-size:16.5px;color:#000;text-align:center;">Juni</div><div class="a" style="left:135px;top:310px;width:205px;height:20px;line-height:20px;font-size:16.67px;color:#00cc33;text-align:center;">70,00 €</div><div class="a" style="left:341px;top:310px;width:205px;height:20px;line-height:20px;font-size:16.67px;color:#ff0000;text-align:center;">10,00 €</div><div class="a" style="left:547px;top:310px;width:205px;height:20px;line-height:20px;font-size:16.67px;color:#00cc33;text-align:center;">60,00 €</div><div class="a" style="left:32px;top:329px;width:102px;height:20px;line-height:20px;font-size:16.5px;color:#000;text-align:center;">Juli</div><div class="a" style="left:135px;top:330px;width:205px;height:20px;line-height:20px;font-size:16.67px;color:#00cc33;text-align:center;">70,00 €</div><div class="a" style="left:341px;top:330px;width:205px;height:20px;line-height:20px;font-size:16.67px;color:#ff0000;text-align:center;">10,00 €</div><div class="a" style="left:547px;top:330px;width:205px;height:20px;line-height:20px;font-size:16.67px;color:#00cc33;text-align:center;">60,00 €</div><div class="a" style="left:32px;top:349px;width:102px;height:20px;line-height:20px;font-size:16.5px;color:#000;text-align:center;">August</div><div class="a" style="left:135px;top:350px;width:205px;height:20px;line-height:20px;font-size:16.67px;color:#00cc33;text-align:center;">70,00 €</div><div class="a" style="left:341px;top:350px;width:205px;height:20px;line-height:20px;font-size:16.67px;color:#ff0000;text-align:center;">10,00 €</div><div class="a" style="left:547px;top:350px;width:205px;height:20px;line-height:20px;font-size:16.67px;color:#00cc33;text-align:center;">60,00 €</div><div class="a" style="left:32px;top:369px;width:102px;height:20px;line-height:20px;font-size:16.5px;color:#000;text-align:center;">September</div><div class="a" style="left:135px;top:370px;width:205px;height:20px;line-height:20px;font-size:16.67px;color:#00cc33;text-align:center;">70,00 €</div><div class="a" style="left:341px;top:370px;width:205px;height:20px;line-height:20px;font-size:16.67px;color:#ff0000;text-align:center;">10,00 €</div><div class="a" style="left:547px;top:370px;width:205px;height:20px;line-height:20px;font-size:16.67px;color:#00cc33;text-align:center;">60,00 €</div><div class="a" style="left:32px;top:389px;width:102px;height:20px;line-height:20px;font-size:16.5px;color:#000;text-align:center;">Oktober</div><div class="a" style="left:135px;top:390px;width:205px;height:20px;line-height:20px;font-size:16.67px;color:#00cc33;text-align:center;">70,00 €</div><div class="a" style="left:341px;top:390px;width:205px;height:20px;line-height:20px;font-size:16.67px;color:#ff0000;text-align:center;">10,00 €</div><div class="a" style="left:547px;top:390px;width:205px;height:20px;line-height:20px;font-size:16.67px;color:#00cc33;text-align:center;">60,00 €</div><div class="a" style="left:32px;top:409px;width:102px;height:20px;line-height:20px;font-size:16.5px;color:#000;text-align:center;">November</div><div class="a" style="left:135px;top:410px;width:205px;height:20px;line-height:20px;font-size:16.67px;color:#00cc33;text-align:center;">70,00 €</div><div class="a" style="left:341px;top:410px;width:205px;height:20px;line-height:20px;font-size:16.67px;color:#ff0000;text-align:center;">10,00 €</div><div class="a" style="left:547px;top:410px;width:205px;height:20px;line-height:20px;font-size:16.67px;color:#00cc33;text-align:center;">60,00 €</div><div class="a" style="left:32px;top:429px;width:102px;height:20px;line-height:20px;font-size:16.5px;color:#000;text-align:center;">Dezember</div><div class="a" style="left:135px;top:430px;width:205px;height:20px;line-height:20px;font-size:16.67px;color:#00cc33;text-align:center;">70,00 €</div><div class="a" style="left:341px;top:430px;width:205px;height:20px;line-height:20px;font-size:16.67px;color:#ff0000;text-align:center;">10,00 €</div><div class="a" style="left:547px;top:430px;width:205px;height:20px;line-height:20px;font-size:16.67px;color:#00cc33;text-align:center;">60,00 €</div><div class="a" style="left:547px;top:470px;width:205px;height:20px;line-height:20px;font-size:16.67px;color:#00cc33;text-align:center;">830,00 €</div><div class="a" style="left:547px;top:489px;width:205px;height:20px;line-height:20px;font-size:16.5px;color:#000;text-align:center;">Jahreseinkommen</div><div class="a" style="left:959px;top:170px;width:102px;height:20px;line-height:20px;font-size:16.67px;color:#000;text-align:center;">2018</div><div class="a" style="left:959px;top:189px;width:102px;height:20px;line-height:20px;font-size:16.5px;color:#000;text-align:center;">Monat</div><div class="a" style="left:1062px;top:189px;width:205px;height:20px;line-height:20px;font-size:16.5px;color:#000;text-align:center;">Einnahmen</div><div class="a" style="left:1268px;top:189px;width:205px;height:20px;line-height:20px;font-size:16.5px;color:#000;text-align:center;">Ausgaben</div><div class="a" style="left:1474px;top:189px;width:205px;height:20px;line-height:20px;font-size:16.5px;color:#000;text-align:center;">Monatsbetrag</div><div class="a" style="left:959px;top:209px;width:102px;height:20px;line-height:20px;font-size:16.5px;color:#000;text-align:left;padding-left:0px;">Januar</div><div class="a" style="left:1474px;top:210px;width:205px;height:20px;line-height:20px;font-size:16.67px;color:#00cc33;text-align:center;">0,00 €</div><div class="a" style="left:959px;top:229px;width:102px;height:20px;line-height:20px;font-size:16.5px;color:#000;text-align:left;padding-left:0px;">Februar</div><div class="a" style="left:1474px;top:230px;width:205px;height:20px;line-height:20px;font-size:16.67px;color:#00cc33;text-align:center;">0,00 €</div><div class="a" style="left:959px;top:249px;width:102px;height:20px;line-height:20px;font-size:16.5px;color:#000;text-align:left;padding-left:0px;">März</div><div class="a" style="left:1474px;top:250px;width:205px;height:20px;line-height:20px;font-size:16.67px;color:#00cc33;text-align:center;">0,00 €</div><div class="a" style="left:959px;top:269px;width:102px;height:20px;line-height:20px;font-size:16.5px;color:#000;text-align:left;padding-left:0px;">April</div><div class="a" style="left:1474px;top:270px;width:205px;height:20px;line-height:20px;font-size:16.67px;color:#00cc33;text-align:center;">0,00 €</div><div class="a" style="left:959px;top:289px;width:102px;height:20px;line-height:20px;font-size:16.5px;color:#000;text-align:left;padding-left:0px;">Mai</div><div class="a" style="left:1474px;top:290px;width:205px;height:20px;line-height:20px;font-size:16.67px;color:#00cc33;text-align:center;">0,00 €</div><div class="a" style="left:959px;top:309px;width:102px;height:20px;line-height:20px;font-size:16.5px;color:#000;text-align:left;padding-left:0px;">Juni</div><div class="a" style="left:1474px;top:310px;width:205px;height:20px;line-height:20px;font-size:16.67px;color:#00cc33;text-align:center;">0,00 €</div><div class="a" style="left:959px;top:329px;width:102px;height:20px;line-height:20px;font-size:16.5px;color:#000;text-align:left;padding-left:0px;">Juli</div><div class="a" style="left:1474px;top:330px;width:205px;height:20px;line-height:20px;font-size:16.67px;color:#00cc33;text-align:center;">0,00 €</div><div class="a" style="left:959px;top:349px;width:102px;height:20px;line-height:20px;font-size:16.5px;color:#000;text-align:left;padding-left:0px;">August</div><div class="a" style="left:1474px;top:350px;width:205px;height:20px;line-height:20px;font-size:16.67px;color:#00cc33;text-align:center;">0,00 €</div><div class="a" style="left:959px;top:369px;width:102px;height:20px;line-height:20px;font-size:16.5px;color:#000;text-align:left;padding-left:0px;">September</div><div class="a" style="left:1474px;top:370px;width:205px;height:20px;line-height:20px;font-size:16.67px;color:#00cc33;text-align:center;">0,00 €</div><div class="a" style="left:959px;top:389px;width:102px;height:20px;line-height:20px;font-size:16.5px;color:#000;text-align:left;padding-left:0px;">Oktober</div><div class="a" style="left:1474px;top:390px;width:205px;height:20px;line-height:20px;font-size:16.67px;color:#00cc33;text-align:center;">0,00 €</div><div class="a" style="left:959px;top:409px;width:102px;height:20px;line-height:20px;font-size:16.5px;color:#000;text-align:left;padding-left:0px;">November</div><div class="a" style="left:1474px;top:410px;width:205px;height:20px;line-height:20px;font-size:16.67px;color:#00cc33;text-align:center;">0,00 €</div><div class="a" style="left:959px;top:429px;width:102px;height:20px;line-height:20px;font-size:16.5px;color:#000;text-align:left;padding-left:0px;">Dezember</div><div class="a" style="left:1474px;top:430px;width:205px;height:20px;line-height:20px;font-size:16.67px;color:#00cc33;text-align:center;">0,00 €</div><div class="a" style="left:1474px;top:470px;width:205px;height:20px;line-height:20px;font-size:16.67px;color:#00cc33;text-align:center;">0,00 €</div><div class="a" style="left:1474px;top:489px;width:205px;height:20px;line-height:20px;font-size:16.5px;color:#000;text-align:center;">Jahreseinkommen</div><div class="a" style="left:32px;top:550px;width:102px;height:20px;line-height:20px;font-size:16.67px;color:#000;text-align:center;">2019</div><div class="a" style="left:32px;top:569px;width:102px;height:20px;line-height:20px;font-size:16.5px;color:#000;text-align:center;">Monat</div><div class="a" style="left:135px;top:569px;width:205px;height:20px;line-height:20px;font-size:16.5px;color:#000;text-align:center;">Einnahmen</div><div class="a" style="left:341px;top:569px;width:205px;height:20px;line-height:20px;font-size:16.5px;color:#000;text-align:center;">Ausgaben</div><div class="a" style="left:547px;top:569px;width:205px;height:20px;line-height:20px;font-size:16.5px;color:#000;text-align:center;">Monatsbetrag</div><div class="a" style="left:32px;top:589px;width:102px;height:20px;line-height:20px;font-size:16.5px;color:#000;text-align:left;padding-left:0px;">Januar</div><div class="a" style="left:135px;top:590px;width:205px;height:20px;line-height:20px;font-size:16.67px;color:#00cc33;text-align:center;">70,00 €</div><div class="a" style="left:341px;top:590px;width:205px;height:20px;line-height:20px;font-size:16.67px;color:#ff0000;text-align:center;">10,00 €</div><div class="a" style="left:547px;top:590px;width:205px;height:20px;line-height:20px;font-size:16.67px;color:#00cc33;text-align:center;">60,00 €</div><div class="a" style="left:32px;top:609px;width:102px;height:20px;line-height:20px;font-size:16.5px;color:#000;text-align:left;padding-left:0px;">Februar</div><div class="a" style="left:135px;top:610px;width:205px;height:20px;line-height:20px;font-size:16.67px;color:#00cc33;text-align:center;">70,00 €</div><div class="a" style="left:341px;top:610px;width:205px;height:20px;line-height:20px;font-size:16.67px;color:#ff0000;text-align:center;">10,00 €</div><div class="a" style="left:547px;top:610px;width:205px;height:20px;line-height:20px;font-size:16.67px;color:#00cc33;text-align:center;">60,00 €</div><div class="a" style="left:32px;top:629px;width:102px;height:20px;line-height:20px;font-size:16.5px;color:#000;text-align:left;padding-left:0px;">März</div><div class="a" style="left:135px;top:630px;width:205px;height:20px;line-height:20px;font-size:16.67px;color:#00cc33;text-align:center;">70,00 €</div><div class="a" style="left:341px;top:630px;width:205px;height:20px;line-height:20px;font-size:16.67px;color:#ff0000;text-align:center;">10,00 €</div><div class="a" style="left:547px;top:630px;width:205px;height:20px;line-height:20px;font-size:16.67px;color:#00cc33;text-align:center;">60,00 €</div><div class="a" style="left:32px;top:649px;width:102px;height:20px;line-height:20px;font-size:16.5px;color:#000;text-align:left;padding-left:0px;">April</div><div class="a" style="left:135px;top:650px;width:205px;height:20px;line-height:20px;font-size:16.67px;color:#00cc33;text-align:center;">70,00 €</div><div class="a" style="left:341px;top:650px;width:205px;height:20px;line-height:20px;font-size:16.67px;color:#ff0000;text-align:center;">10,00 €</div><div class="a" style="left:547px;top:650px;width:205px;height:20px;line-height:20px;font-size:16.67px;color:#00cc33;text-align:center;">60,00 €</div><div class="a" style="left:32px;top:669px;width:102px;height:20px;line-height:20px;font-size:16.5px;color:#000;text-align:left;padding-left:0px;">Mai</div><div class="a" style="left:135px;top:670px;width:205px;height:20px;line-height:20px;font-size:16.67px;color:#00cc33;text-align:center;">70,00 €</div><div class="a" style="left:341px;top:670px;width:205px;height:20px;line-height:20px;font-size:16.67px;color:#ff0000;text-align:center;">10,00 €</div><div class="a" style="left:547px;top:670px;width:205px;height:20px;line-height:20px;font-size:16.67px;color:#00cc33;text-align:center;">60,00 €</div><div class="a" style="left:32px;top:689px;width:102px;height:20px;line-height:20px;font-size:16.5px;color:#000;text-align:left;padding-left:0px;">Juni</div><div class="a" style="left:135px;top:690px;width:205px;height:20px;line-height:20px;font-size:16.67px;color:#00cc33;text-align:center;">70,00 €</div><div class="a" style="left:341px;top:690px;width:205px;height:20px;line-height:20px;font-size:16.67px;color:#ff0000;text-align:center;">10,00 €</div><div class="a" style="left:547px;top:690px;width:205px;height:20px;line-height:20px;font-size:16.67px;color:#00cc33;text-align:center;">60,00 €</div><div class="a" style="left:32px;top:709px;width:102px;height:20px;line-height:20px;font-size:16.5px;color:#000;text-align:left;padding-left:0px;">Juli</div><div class="a" style="left:135px;top:710px;width:205px;height:20px;line-height:20px;font-size:16.67px;color:#00cc33;text-align:center;">70,00 €</div><div class="a" style="left:341px;top:710px;width:205px;height:20px;line-height:20px;font-size:16.67px;color:#ff0000;text-align:center;">10,00 €</div><div class="a" style="left:547px;top:710px;width:205px;height:20px;line-height:20px;font-size:16.67px;color:#00cc33;text-align:center;">60,00 €</div><div class="a" style="left:32px;top:729px;width:102px;height:20px;line-height:20px;font-size:16.5px;color:#000;text-align:left;padding-left:0px;">August</div><div class="a" style="left:135px;top:730px;width:205px;height:20px;line-height:20px;font-size:16.67px;color:#00cc33;text-align:center;">70,00 €</div><div class="a" style="left:341px;top:730px;width:205px;height:20px;line-height:20px;font-size:16.67px;color:#ff0000;text-align:center;">10,00 €</div><div class="a" style="left:547px;top:730px;width:205px;height:20px;line-height:20px;font-size:16.67px;color:#00cc33;text-align:center;">60,00 €</div><div class="a" style="left:32px;top:749px;width:102px;height:20px;line-height:20px;font-size:16.5px;color:#000;text-align:left;padding-left:0px;">September</div><div class="a" style="left:135px;top:750px;width:205px;height:20px;line-height:20px;font-size:16.67px;color:#00cc33;text-align:center;">70,00 €</div><div class="a" style="left:341px;top:750px;width:205px;height:20px;line-height:20px;font-size:16.67px;color:#ff0000;text-align:center;">10,00 €</div><div class="a" style="left:547px;top:750px;width:205px;height:20px;line-height:20px;font-size:16.67px;color:#00cc33;text-align:center;">60,00 €</div><div class="a" style="left:32px;top:769px;width:102px;height:20px;line-height:20px;font-size:16.5px;color:#000;text-align:left;padding-left:0px;">Oktober</div><div class="a" style="left:135px;top:770px;width:205px;height:20px;line-height:20px;font-size:16.67px;color:#00cc33;text-align:center;">70,00 €</div><div class="a" style="left:341px;top:770px;width:205px;height:20px;line-height:20px;font-size:16.67px;color:#ff0000;text-align:center;">10,00 €</div><div class="a" style="left:547px;top:770px;width:205px;height:20px;line-height:20px;font-size:16.67px;color:#00cc33;text-align:center;">60,00 €</div><div class="a" style="left:32px;top:789px;width:102px;height:20px;line-height:20px;font-size:16.5px;color:#000;text-align:left;padding-left:0px;">November</div><div class="a" style="left:135px;top:790px;width:205px;height:20px;line-height:20px;font-size:16.67px;color:#00cc33;text-align:center;">70,00 €</div><div class="a" style="left:341px;top:790px;width:205px;height:20px;line-height:20px;font-size:16.67px;color:#ff0000;text-align:center;">10,00 €</div><div class="a" style="left:547px;top:790px;width:205px;height:20px;line-height:20px;font-size:16.67px;color:#00cc33;text-align:center;">60,00 €</div><div class="a" style="left:32px;top:809px;width:102px;height:20px;line-height:20px;font-size:16.5px;color:#000;text-align:left;padding-left:0px;">Dezember</div><div class="a" style="left:135px;top:810px;width:205px;height:20px;line-height:20px;font-size:16.67px;color:#00cc33;text-align:center;">70,00 €</div><div class="a" style="left:341px;top:810px;width:205px;height:20px;line-height:20px;font-size:16.67px;color:#ff0000;text-align:center;">10,00 €</div><div class="a" style="left:547px;top:810px;width:205px;height:20px;line-height:20px;font-size:16.67px;color:#00cc33;text-align:center;">60,00 €</div><div class="a" style="left:547px;top:850px;width:205px;height:20px;line-height:20px;font-size:16.67px;color:#00cc33;text-align:center;">720,00 €</div><div class="a" style="left:547px;top:869px;width:205px;height:20px;line-height:20px;font-size:16.5px;color:#000;text-align:center;">Jahreseinkommen</div><div class="a" style="left:959px;top:570px;width:102px;height:20px;line-height:20px;font-size:16.67px;color:#000;text-align:center;">2020</div><div class="a" style="left:959px;top:589px;width:102px;height:20px;line-height:20px;font-size:16.5px;color:#000;text-align:center;">Monat</div><div class="a" style="left:1062px;top:589px;width:205px;height:20px;line-height:20px;font-size:16.5px;color:#000;text-align:center;">Einnahmen</div><div class="a" style="left:1268px;top:589px;width:205px;height:20px;line-height:20px;font-size:16.5px;color:#000;text-align:center;">Ausgaben</div><div class="a" style="left:1474px;top:589px;width:205px;height:20px;line-height:20px;font-size:16.5px;color:#000;text-align:center;">Monatsbetrag</div><div class="a" style="left:959px;top:609px;width:102px;height:20px;line-height:20px;font-size:16.5px;color:#000;text-align:left;padding-left:0px;">Januar</div><div class="a" style="left:1474px;top:610px;width:205px;height:20px;line-height:20px;font-size:16.67px;color:#00cc33;text-align:center;">0,00 €</div><div class="a" style="left:959px;top:629px;width:102px;height:20px;line-height:20px;font-size:16.5px;color:#000;text-align:left;padding-left:0px;">Februar</div><div class="a" style="left:1474px;top:630px;width:205px;height:20px;line-height:20px;font-size:16.67px;color:#00cc33;text-align:center;">0,00 €</div><div class="a" style="left:959px;top:649px;width:102px;height:20px;line-height:20px;font-size:16.5px;color:#000;text-align:left;padding-left:0px;">März</div><div class="a" style="left:1474px;top:650px;width:205px;height:20px;line-height:20px;font-size:16.67px;color:#00cc33;text-align:center;">0,00 €</div><div class="a" style="left:959px;top:669px;width:102px;height:20px;line-height:20px;font-size:16.5px;color:#000;text-align:left;padding-left:0px;">April</div><div class="a" style="left:1474px;top:670px;width:205px;height:20px;line-height:20px;font-size:16.67px;color:#00cc33;text-align:center;">0,00 €</div><div class="a" style="left:959px;top:689px;width:102px;height:20px;line-height:20px;font-size:16.5px;color:#000;text-align:left;padding-left:0px;">Mai</div><div class="a" style="left:1474px;top:690px;width:205px;height:20px;line-height:20px;font-size:16.67px;color:#00cc33;text-align:center;">0,00 €</div><div class="a" style="left:959px;top:709px;width:102px;height:20px;line-height:20px;font-size:16.5px;color:#000;text-align:left;padding-left:0px;">Juni</div><div class="a" style="left:1474px;top:710px;width:205px;height:20px;line-height:20px;font-size:16.67px;color:#00cc33;text-align:center;">0,00 €</div><div class="a" style="left:959px;top:729px;width:102px;height:20px;line-height:20px;font-size:16.5px;color:#000;text-align:left;padding-left:0px;">Juli</div><div class="a" style="left:1474px;top:730px;width:205px;height:20px;line-height:20px;font-size:16.67px;color:#00cc33;text-align:center;">0,00 €</div><div class="a" style="left:959px;top:749px;width:102px;height:20px;line-height:20px;font-size:16.5px;color:#000;text-align:left;padding-left:0px;">August</div><div class="a" style="left:1474px;top:750px;width:205px;height:20px;line-height:20px;font-size:16.67px;color:#00cc33;text-align:center;">0,00 €</div><div class="a" style="left:959px;top:769px;width:102px;height:20px;line-height:20px;font-size:16.5px;color:#000;text-align:left;padding-left:0px;">September</div><div class="a" style="left:1474px;top:770px;width:205px;height:20px;line-height:20px;font-size:16.67px;color:#00cc33;text-align:center;">0,00 €</div><div class="a" style="left:959px;top:789px;width:102px;height:20px;line-height:20px;font-size:16.5px;color:#000;text-align:left;padding-left:0px;">Oktober</div><div class="a" style="left:1474px;top:790px;width:205px;height:20px;line-height:20px;font-size:16.67px;color:#00cc33;text-align:center;">0,00 €</div><div class="a" style="left:959px;top:809px;width:102px;height:20px;line-height:20px;font-size:16.5px;color:#000;text-align:left;padding-left:0px;">November</div><div class="a" style="left:1474px;top:810px;width:205px;height:20px;line-height:20px;font-size:16.67px;color:#00cc33;text-align:center;">0,00 €</div><div class="a" style="left:959px;top:829px;width:102px;height:20px;line-height:20px;font-size:16.5px;color:#000;text-align:left;padding-left:0px;">Dezember</div><div class="a" style="left:1474px;top:830px;width:205px;height:20px;line-height:20px;font-size:16.67px;color:#00cc33;text-align:center;">0,00 €</div><div class="a" style="left:1474px;top:870px;width:205px;height:20px;line-height:20px;font-size:16.67px;color:#00cc33;text-align:center;">0,00 €</div><div class="a" style="left:1474px;top:889px;width:205px;height:20px;line-height:20px;font-size:16.5px;color:#000;text-align:center;">Jahreseinkommen</div><div class="a" style="left:133px;top:468px;width:100px;height:17px;border:3px solid #000"></div><div class="a" style="left:236px;top:488px;width:6px;height:6px;background:#000"></div><div class="a" style="left:785px;top:155px;width:133px;height:31px;background:#000"></div><div class="a cm" style="left:780px;top:150px;width:128px;height:30px;">Jahrestabelle</div><svg class="a" style="left:0;top:0" width="1821" height="925"><polyline points="756,184 767,166.5 780,166.5" fill="none" stroke="#808080" stroke-width="1"/><polygon points="753,189.5 756,177 763.5,181.5" fill="#808080"/></svg><div class="a" style="left:1713px;top:155px;width:133px;height:31px;background:#000"></div><div class="a cm" style="left:1708px;top:150px;width:128px;height:30px;">Jahrestabelle</div><svg class="a" style="left:0;top:0" width="1821" height="925"><polyline points="1683,184 1694,166.5 1708,166.5" fill="none" stroke="#808080" stroke-width="1"/><polygon points="1680,189.5 1683,177 1690.5,181.5" fill="#808080"/></svg><div class="a" style="left:785px;top:535px;width:133px;height:31px;background:#000"></div><div class="a cm" style="left:780px;top:530px;width:128px;height:30px;">Jahrestabelle</div><svg class="a" style="left:0;top:0" width="1821" height="925"><polyline points="756,564 767,546.5 780,546.5" fill="none" stroke="#808080" stroke-width="1"/><polygon points="753,569.5 756,557 763.5,561.5" fill="#808080"/></svg><div class="a" style="left:1713px;top:555px;width:133px;height:31px;background:#000"></div><div class="a cm" style="left:1708px;top:550px;width:128px;height:30px;">Jahrestabelle</div><svg class="a" style="left:0;top:0" width="1821" height="925"><polyline points="1683,584 1694,566.5 1708,566.5" fill="none" stroke="#808080" stroke-width="1"/><polygon points="1680,589.5 1683,577 1690.5,581.5" fill="#808080"/></svg><div class="a" style="left:785px;top:915px;width:133px;height:31px;background:#000"></div><div class="a cm" style="left:780px;top:910px;width:128px;height:30px;">Jahrestabelle</div><svg class="a" style="left:0;top:0" width="1821" height="925"><polyline points="756,944 767,926.5 780,926.5" fill="none" stroke="#808080" stroke-width="1"/><polygon points="753,949.5 756,937 763.5,941.5" fill="#808080"/></svg><div class="a" style="left:0;top:126px;width:1821px;height:1px;background:#6e6e6e"></div><div class="a colhdr" style="left:0;top:127px;width:1821px;height:22px;"></div><div class="a" style="left:0;top:149px;width:1821px;height:1px;background:#6e6e6e"></div><div class="a" style="left:31px;top:127px;width:1px;height:22px;background:#6e6e6e"></div><div class="a hl" style="left:32px;top:127px;width:102px;color:#000">A</div><div class="a" style="left:134px;top:127px;width:103px;height:10px;background:#80bfff"></div><div class="a" style="left:134px;top:137px;width:103px;height:13px;background:#3399ff"></div><div class="a" style="left:134px;top:127px;width:1px;height:22px;background:#6e6e6e"></div><div class="a hl" style="left:135px;top:127px;width:102px;color:#fff;font-weight:bold">B</div><div class="a" style="left:237px;top:127px;width:1px;height:22px;background:#6e6e6e"></div><div class="a hl" style="left:238px;top:127px;width:102px;color:#000">C</div><div class="a" style="left:340px;top:127px;width:1px;height:22px;background:#6e6e6e"></div><div class="a hl" style="left:341px;top:127px;width:102px;color:#000">D</div><div class="a" style="left:443px;top:127px;width:1px;height:22px;background:#6e6e6e"></div><div class="a hl" style="left:444px;top:127px;width:102px;color:#000">E</div><div class="a" style="left:546px;top:127px;width:1px;height:22px;background:#6e6e6e"></div><div class="a hl" style="left:547px;top:127px;width:102px;color:#000">F</div><div class="a" style="left:649px;top:127px;width:1px;height:22px;background:#6e6e6e"></div><div class="a hl" style="left:650px;top:127px;width:102px;color:#000">G</div><div class="a" style="left:752px;top:127px;width:1px;height:22px;background:#6e6e6e"></div><div class="a hl" style="left:753px;top:127px;width:102px;color:#000">H</div><div class="a" style="left:855px;top:127px;width:1px;height:22px;background:#6e6e6e"></div><div class="a hl" style="left:856px;top:127px;width:102px;color:#000">I</div><div class="a" style="left:958px;top:127px;width:1px;height:22px;background:#6e6e6e"></div><div class="a hl" style="left:959px;top:127px;width:102px;color:#000">J</div><div class="a" style="left:1061px;top:127px;width:1px;height:22px;background:#6e6e6e"></div><div class="a hl" style="left:1062px;top:127px;width:102px;color:#000">K</div><div class="a" style="left:1164px;top:127px;width:1px;height:22px;background:#6e6e6e"></div><div class="a hl" style="left:1165px;top:127px;width:102px;color:#000">L</div><div class="a" style="left:1267px;top:127px;width:1px;height:22px;background:#6e6e6e"></div><div class="a hl" style="left:1268px;top:127px;width:102px;color:#000">M</div><div class="a" style="left:1370px;top:127px;width:1px;height:22px;background:#6e6e6e"></div><div class="a hl" style="left:1371px;top:127px;width:102px;color:#000">N</div><div class="a" style="left:1473px;top:127px;width:1px;height:22px;background:#6e6e6e"></div><div class="a hl" style="left:1474px;top:127px;width:102px;color:#000">O</div><div class="a" style="left:1576px;top:127px;width:1px;height:22px;background:#6e6e6e"></div><div class="a hl" style="left:1577px;top:127px;width:102px;color:#000">P</div><div class="a" style="left:1679px;top:127px;width:1px;height:22px;background:#6e6e6e"></div><div class="a hl" style="left:1680px;top:127px;width:102px;color:#000">Q</div><div class="a" style="left:1782px;top:127px;width:1px;height:22px;background:#6e6e6e"></div><div class="a hl" style="left:1783px;top:127px;width:102px;color:#000">R</div><div class="a rowhdr" style="left:0;top:150px;width:31px;height:775px;"></div><div class="a" style="left:31px;top:127px;width:1px;height:798px;background:#6e6e6e"></div><div class="a" style="left:0;top:169px;width:31px;height:1px;background:#6e6e6e"></div><div class="a rl" style="left:0;top:151px;width:22px;color:#000">1</div><div class="a" style="left:0;top:189px;width:31px;height:1px;background:#6e6e6e"></div><div class="a rl" style="left:0;top:171px;width:22px;color:#000">2</div><div class="a" style="left:0;top:209px;width:31px;height:1px;background:#6e6e6e"></div><div class="a rl" style="left:0;top:191px;width:22px;color:#000">3</div><div class="a" style="left:0;top:229px;width:31px;height:1px;background:#6e6e6e"></div><div class="a rl" style="left:0;top:211px;width:22px;color:#000">4</div><div class="a" style="left:0;top:249px;width:31px;height:1px;background:#6e6e6e"></div><div class="a rl" style="left:0;top:231px;width:22px;color:#000">5</div><div class="a" style="left:0;top:269px;width:31px;height:1px;background:#6e6e6e"></div><div class="a rl" style="left:0;top:251px;width:22px;color:#000">6</div><div class="a" style="left:0;top:289px;width:31px;height:1px;background:#6e6e6e"></div><div class="a rl" style="left:0;top:271px;width:22px;color:#000">7</div><div class="a" style="left:0;top:309px;width:31px;height:1px;background:#6e6e6e"></div><div class="a rl" style="left:0;top:291px;width:22px;color:#000">8</div><div class="a" style="left:0;top:329px;width:31px;height:1px;background:#6e6e6e"></div><div class="a rl" style="left:0;top:311px;width:22px;color:#000">9</div><div class="a" style="left:0;top:349px;width:31px;height:1px;background:#6e6e6e"></div><div class="a rl" style="left:0;top:331px;width:22px;color:#000">10</div><div class="a" style="left:0;top:369px;width:31px;height:1px;background:#6e6e6e"></div><div class="a rl" style="left:0;top:351px;width:22px;color:#000">11</div><div class="a" style="left:0;top:389px;width:31px;height:1px;background:#6e6e6e"></div><div class="a rl" style="left:0;top:371px;width:22px;color:#000">12</div><div class="a" style="left:0;top:409px;width:31px;height:1px;background:#6e6e6e"></div><div class="a rl" style="left:0;top:391px;width:22px;color:#000">13</div><div class="a" style="left:0;top:429px;width:31px;height:1px;background:#6e6e6e"></div><div class="a rl" style="left:0;top:411px;width:22px;color:#000">14</div><div class="a" style="left:0;top:449px;width:31px;height:1px;background:#6e6e6e"></div><div class="a rl" style="left:0;top:431px;width:22px;color:#000">15</div><div class="a" style="left:0;top:469px;width:31px;height:1px;background:#6e6e6e"></div><div class="a rl" style="left:0;top:451px;width:22px;color:#000">16</div><div class="a" style="left:0;top:469px;width:32px;height:21px;background:#3399ff"></div><div class="a" style="left:0;top:470px;width:10px;height:19px;background:#80bfff"></div><div class="a rl" style="left:0;top:471px;width:22px;color:#fff">17</div><div class="a" style="left:0;top:509px;width:31px;height:1px;background:#6e6e6e"></div><div class="a rl" style="left:0;top:491px;width:22px;color:#000">18</div><div class="a" style="left:0;top:529px;width:31px;height:1px;background:#6e6e6e"></div><div class="a rl" style="left:0;top:511px;width:22px;color:#000">19</div><div class="a" style="left:0;top:549px;width:31px;height:1px;background:#6e6e6e"></div><div class="a rl" style="left:0;top:531px;width:22px;color:#000">20</div><div class="a" style="left:0;top:569px;width:31px;height:1px;background:#6e6e6e"></div><div class="a rl" style="left:0;top:551px;width:22px;color:#000">21</div><div class="a" style="left:0;top:589px;width:31px;height:1px;background:#6e6e6e"></div><div class="a rl" style="left:0;top:571px;width:22px;color:#000">22</div><div class="a" style="left:0;top:609px;width:31px;height:1px;background:#6e6e6e"></div><div class="a rl" style="left:0;top:591px;width:22px;color:#000">23</div><div class="a" style="left:0;top:629px;width:31px;height:1px;background:#6e6e6e"></div><div class="a rl" style="left:0;top:611px;width:22px;color:#000">24</div><div class="a" style="left:0;top:649px;width:31px;height:1px;background:#6e6e6e"></div><div class="a rl" style="left:0;top:631px;width:22px;color:#000">25</div><div class="a" style="left:0;top:669px;width:31px;height:1px;background:#6e6e6e"></div><div class="a rl" style="left:0;top:651px;width:22px;color:#000">26</div><div class="a" style="left:0;top:689px;width:31px;height:1px;background:#6e6e6e"></div><div class="a rl" style="left:0;top:671px;width:22px;color:#000">27</div><div class="a" style="left:0;top:709px;width:31px;height:1px;background:#6e6e6e"></div><div class="a rl" style="left:0;top:691px;width:22px;color:#000">28</div><div class="a" style="left:0;top:729px;width:31px;height:1px;background:#6e6e6e"></div><div class="a rl" style="left:0;top:711px;width:22px;color:#000">29</div><div class="a" style="left:0;top:749px;width:31px;height:1px;background:#6e6e6e"></div><div class="a rl" style="left:0;top:731px;width:22px;color:#000">30</div><div class="a" style="left:0;top:769px;width:31px;height:1px;background:#6e6e6e"></div><div class="a rl" style="left:0;top:751px;width:22px;color:#000">31</div><div class="a" style="left:0;top:789px;width:31px;height:1px;background:#6e6e6e"></div><div class="a rl" style="left:0;top:771px;width:22px;color:#000">32</div><div class="a" style="left:0;top:809px;width:31px;height:1px;background:#6e6e6e"></div><div class="a rl" style="left:0;top:791px;width:22px;color:#000">33</div><div class="a" style="left:0;top:829px;width:31px;height:1px;background:#6e6e6e"></div><div class="a rl" style="left:0;top:811px;width:22px;color:#000">34</div><div class="a" style="left:0;top:849px;width:31px;height:1px;background:#6e6e6e"></div><div class="a rl" style="left:0;top:831px;width:22px;color:#000">35</div><div class="a" style="left:0;top:869px;width:31px;height:1px;background:#6e6e6e"></div><div class="a rl" style="left:0;top:851px;width:22px;color:#000">36</div><div class="a" style="left:0;top:889px;width:31px;height:1px;background:#6e6e6e"></div><div class="a rl" style="left:0;top:871px;width:22px;color:#000">37</div><div class="a" style="left:0;top:909px;width:31px;height:1px;background:#6e6e6e"></div><div class="a rl" style="left:0;top:891px;width:22px;color:#000">38</div><div class="a" style="left:0;top:929px;width:31px;height:1px;background:#6e6e6e"></div><div class="a rl" style="left:0;top:911px;width:22px;color:#000">39</div>
<div class="a tabbar"></div>
<svg class="a" style="left:0;top:0" width="700" height="974"><defs><linearGradient id="nbt" x1="0" y1="0" x2="0" y2="1"><stop offset="0" stop-color="#f6f6f6"/><stop offset=".5" stop-color="#e8e8e8"/><stop offset=".55" stop-color="#dcdcdc"/><stop offset="1" stop-color="#d2d2d2"/></linearGradient><linearGradient id="thb" x1="0" y1="0" x2="0" y2="1"><stop offset="0" stop-color="#f2f2f2"/><stop offset=".45" stop-color="#e4e4e4"/><stop offset=".5" stop-color="#d6d6d6"/><stop offset="1" stop-color="#cacaca"/></linearGradient></defs><rect x="-7.5" y="926.5" width="18" height="18" rx="2.5" fill="url(#nbt)" stroke="#9a9a9a"/><rect x="13.5" y="926.5" width="18" height="18" rx="2.5" fill="url(#nbt)" stroke="#9a9a9a"/><rect x="34.5" y="926.5" width="18" height="18" rx="2.5" fill="url(#nbt)" stroke="#9a9a9a"/><rect x="55.5" y="926.5" width="18" height="18" rx="2.5" fill="url(#nbt)" stroke="#9a9a9a"/><path d="M5 930.5v9l-5 -4.5z" fill="#000"/><path d="M26 930.5v9l-6 -4.5z" fill="#000"/><path d="M41 930.5v9l6 -4.5z" fill="#000"/><path d="M60.5 930.5v9l6 -4.5z" fill="#000"/><rect x="67.5" y="930.5" width="1.5" height="9" fill="#000"/><path d="M76.5 925.5L82.5 945.5H145.5L143.5 925.5" fill="#ebebeb" stroke="#6a6a6a"/><path d="M222 925.5L217 945.5H282.5L288 925.5" fill="#ebebeb" stroke="#6a6a6a"/><path d="M288 925.5H321" stroke="#6a6a6a"/><rect x="288" y="926" width="33" height="19" fill="#f0f0f0"/><path d="M144.5 925L149.5 945.5H214.5L221.5 925z" fill="#fff"/><path d="M144.5 925L149.5 945.5H214.5L221.5 925" fill="none" stroke="#6a6a6a"/><text x="86" y="941" font-family="Liberation Sans" font-size="15" fill="#000">Tabelle1</text><text x="152.5" y="941" font-family="Liberation Sans" font-weight="bold" font-size="15" fill="#000">Tabelle2</text><text x="222" y="941" font-family="Liberation Sans" font-size="15" fill="#000">Tabelle3</text><rect x="320.5" y="926.5" width="6" height="19" fill="#f8f8f8" stroke="#707070"/><path d="M339 932v7l-5 -3.5z" fill="#505050"/><rect x="348.5" y="926.5" width="309" height="18" rx="2" fill="url(#thb)" stroke="#8a8a8a"/><rect x="498" y="931" width="1.5" height="8" fill="#555"/><rect x="502" y="931" width="1.5" height="8" fill="#555"/><rect x="506" y="931" width="1.5" height="8" fill="#555"/></svg>
<div class="a dtb"></div>
<svg class="a" style="left:0;top:0" width="560" height="974"><defs><linearGradient id="hdl2" x1="0" y1="0" x2="0" y2="1"><stop offset="0" stop-color="#ececec"/><stop offset="1" stop-color="#a2a2a2"/></linearGradient></defs><path d="M9.5 954.5v13l3 -3l2.5 5l2 -1l-2.5 -5h4z" fill="#fff" stroke="#202020"/><rect x="29" y="955" width="1" height="15" fill="#c5c2ba"/><path d="M39 969l14 -14" stroke="#2a70d0" stroke-width="1.3"/><rect x="63.5" y="957.5" width="15" height="9.5" fill="#70b8f0" stroke="#1050a8" stroke-width="1.2"/><ellipse cx="96" cy="962.5" rx="7.5" ry="4.7" fill="#70b8f0" stroke="#1050a8" stroke-width="1.2"/><path d="M113.5 962.5q3 -2 4 2t5 2q3 0 6 -1" stroke="#2a70d0" stroke-width="1.2" fill="none"/><path d="M119 963l8 -8" stroke="#5a4a10" stroke-width="3.6"/><path d="M119 963l8 -8" stroke="#f5d030" stroke-width="2.2"/><path d="M126 954.5l2 2" stroke="#e05060" stroke-width="2.6"/><path d="M141 956h11v3.5M146.5 956v13M144 969h5M141 956v3.5" stroke="#2a5070" stroke-width="2.2" fill="none"/><path d="M163.5 961a7 5 0 1 1 10 4.5l3 3.5l-5 -2.5a7 5 0 0 1 -8 -5z" fill="#f4f6f8" stroke="#707880"/><path d="M166.5 958.5h8M166.5 960.5h8M166.5 962.5h6" stroke="#2a70d0"/><rect x="186.5" y="955" width="1" height="15" fill="#c5c2ba"/><path d="M202.5 954.5l7.5 7.5l-7.5 7.5l-7.5 -7.5z" fill="#68b0f0" stroke="#1050a8" stroke-width="1.1"/><path d="M219 960.5h5.5l-2.75 3z" fill="#000"/><circle cx="238.5" cy="961.5" r="7" fill="#68b0f0" stroke="#1050a8" stroke-width="1.1"/><path d="M234.5 962.5q4 4 8 0" stroke="#fff" stroke-width="1.2" fill="none"/><circle cx="236" cy="959.5" r=".9" fill="#1050a8"/><circle cx="241" cy="959.5" r=".9" fill="#1050a8"/><path d="M255 960.5h5.5l-2.75 3z" fill="#000"/><path d="M267.5 962.5l4 -4v2.5h7v-2.5l4 4l-4 4v-2.5h-7v2.5z" fill="#68b0f0" stroke="#1050a8" stroke-width="1.1"/><path d="M291 960.5h5.5l-2.75 3z" fill="#000"/><rect x="304.5" y="955.5" width="13" height="13" fill="#68b0f0" stroke="#1050a8" stroke-width="1.1"/><path d="M304.5 958.5h13M307.5 958.5v10" stroke="#1050a8"/><path d="M327 960.5h5.5l-2.75 3z" fill="#000"/><path d="M340 956.5h14v8h-8l-5 4l1.5 -4h-2.5z" fill="#68b0f0" stroke="#1050a8" stroke-width="1.1"/><path d="M364 960.5h5.5l-2.75 3z" fill="#000"/><path d="M383 954.5l2.2 4.8l5 .5l-3.8 3.4l1.2 5l-4.6 -2.6l-4.6 2.6l1.2 -5l-3.8 -3.4l5 -.5z" fill="#68b0f0" stroke="#1050a8" stroke-width="1.1"/><path d="M400 960.5h5.5l-2.75 3z" fill="#000"/><rect x="411" y="955" width="1" height="15" fill="#c5c2ba"/><path d="M419.8 962l1.2 -1.2l1.2 1.2l-1.2 1.2z" fill="none" stroke="#a8acb8" stroke-width=".7"/><path d="M423.8 958l1.2 -1.2l1.2 1.2l-1.2 1.2z" fill="none" stroke="#a8acb8" stroke-width=".7"/><path d="M427.8 961l1.2 -1.2l1.2 1.2l-1.2 1.2z" fill="none" stroke="#a8acb8" stroke-width=".7"/><path d="M431.8 957l1.2 -1.2l1.2 1.2l-1.2 1.2z" fill="none" stroke="#a8acb8" stroke-width=".7"/><path d="M425.8 966l1.2 -1.2l1.2 1.2l-1.2 1.2z" fill="none" stroke="#a8acb8" stroke-width=".7"/><path d="M432.8 967l1.2 -1.2l1.2 1.2l-1.2 1.2z" fill="none" stroke="#a8acb8" stroke-width=".7"/><rect x="444" y="955" width="1" height="15" fill="#c5c2ba"/><rect x="453.5" y="957.5" width="14" height="11" fill="none" stroke="#a8acb8"/><path d="M457 966l3.5 -7l3.5 7M458.5 963.5h4" stroke="#a8acb8" fill="none"/><rect x="478.5" y="961.5" width="8" height="7" fill="#cdd1dc" stroke="#a8acb8"/><circle cx="489" cy="960" r="4.5" fill="#dde0e8" stroke="#a8acb8"/><rect x="502" y="955" width="1" height="15" fill="#c5c2ba"/><path d="M512.5 955.5h4v5h5v8h-7v-5h-2z" fill="#d0d4de" stroke="#a8acb8"/><rect x="538" y="950" width="10" height="24" fill="url(#hdl2)"/><path d="M540.5 967h5l-2.5 3z" fill="#000"/><rect x="548" y="947" width="1" height="27" fill="#b0b6c8"/></svg>
</body></html>
